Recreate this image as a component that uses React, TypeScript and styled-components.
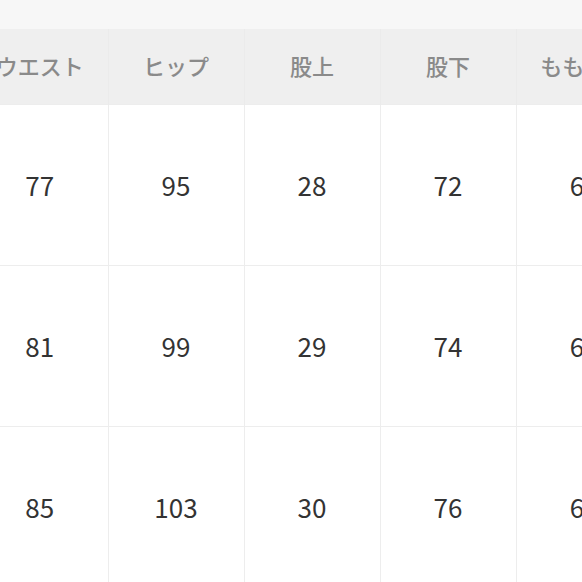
import styled, { createGlobalStyle } from "styled-components";

const GlobalStyle = createGlobalStyle`
  html, body {
    margin: 0;
    padding: 0;
    background: #ffffff;
  }
  body {
    font-family: "Noto Sans CJK JP", "Noto Sans", sans-serif;
    overflow: hidden;
  }
`;

const Page = styled.div`
  width: 582px;
  height: 582px;
  overflow: hidden;
  display: flex;
  flex-direction: column;
`;

const TopBar = styled.div`
  height: 29px;
  background: #f7f7f7;
  flex-shrink: 0;
`;

const Scroller = styled.div`
  overflow: hidden;
`;

const Table = styled.table`
  width: 680px;
  min-width: 680px;
  border-collapse: collapse;
  table-layout: fixed;
  margin-left: -28px;
`;

const HeadCell = styled.th`
  height: 72px;
  padding: 0 0 3px;
  background: #efefef;
  border-left: 1px solid #ebebeb;
  color: #8a8a8a;
  font-size: 22px;
  font-weight: 500;
  text-align: center;
  vertical-align: middle;
  white-space: nowrap;
  &:first-child {
    border-left: none;
  }
`;

const Cell = styled.td`
  height: 158px;
  padding: 0 0 2px;
  border-left: 1px solid #ededed;
  border-top: 1px solid #ededed;
  color: #333333;
  font-size: 26px;
  font-weight: 400;
  text-align: center;
  vertical-align: middle;
  &:first-child {
    border-left: none;
  }
`;

const headers = ["ウエスト", "ヒップ", "股上", "股下", "もも周り"];

const rows = [
  ["77", "95", "28", "72", "60"],
  ["81", "99", "29", "74", "62"],
  ["85", "103", "30", "76", "64"],
];

export default function App() {
  return (
    <>
      <GlobalStyle />
      <Page>
        <TopBar />
        <Scroller>
          <Table>
            <colgroup>
              {headers.map((h) => (
                <col key={h} style={{ width: 136 }} />
              ))}
            </colgroup>
            <thead>
              <tr>
                {headers.map((h) => (
                  <HeadCell key={h}>{h}</HeadCell>
                ))}
              </tr>
            </thead>
            <tbody>
              {rows.map((r, i) => (
                <tr key={i}>
                  {r.map((v, j) => (
                    <Cell key={j}>{v}</Cell>
                  ))}
                </tr>
              ))}
            </tbody>
          </Table>
        </Scroller>
      </Page>
    </>
  );
}
